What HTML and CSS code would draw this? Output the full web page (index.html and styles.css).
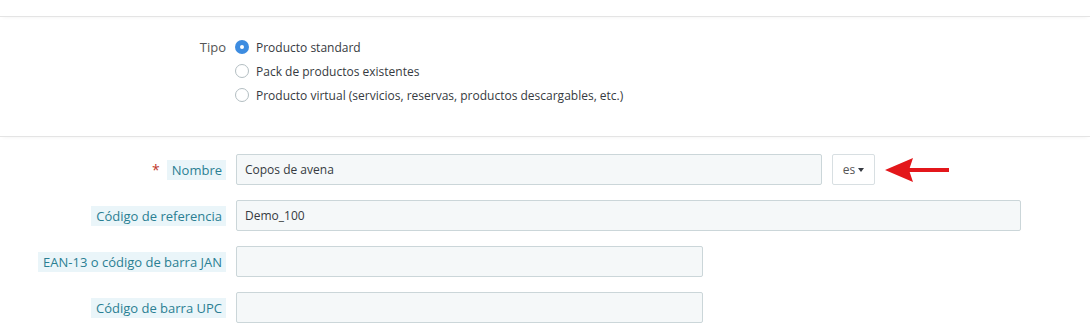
FILE: index.html
```html
<!DOCTYPE html>
<html lang="es">
<head>
  <meta charset="UTF-8" />
  <title>Producto</title>
  <link rel="stylesheet" href="styles.css">
</head>
<body>
  <div class="section section-top"></div>

  <div class="section type-section">
    <div class="form-row">
      <div class="row-label plain">Tipo</div>
      <div class="radio-list">
        <label class="radio"><span class="dot checked"></span>Producto standard</label>
        <label class="radio"><span class="dot"></span>Pack de productos existentes</label>
        <label class="radio"><span class="dot"></span>Producto virtual (servicios, reservas, productos descargables, etc.)</label>
      </div>
    </div>
  </div>

  <div class="section fields">
    <div class="form-row field">
      <div class="row-label"><span class="required">*</span><span class="tag">Nombre</span></div>
      <div class="input wide">Copos de avena</div>
      <div class="lang-btn">es <span class="caret"></span></div>
      <svg class="arrow" width="66" height="26" viewBox="0 0 66 26">
        <rect x="22" y="11" width="42" height="4" fill="#e3171b"/>
        <polygon points="0,13 28,1 24,13 28,25" fill="#e3171b"/>
      </svg>
    </div>
    <div class="form-row field">
      <div class="row-label"><span class="tag">Código de referencia</span></div>
      <div class="input full">Demo_100</div>
    </div>
    <div class="form-row field">
      <div class="row-label"><span class="tag">EAN-13 o código de barra JAN</span></div>
      <div class="input half"></div>
    </div>
    <div class="form-row field">
      <div class="row-label"><span class="tag">Código de barra UPC</span></div>
      <div class="input half"></div>
    </div>
  </div>
</body>
</html>
```

FILE: styles.css
```css
body {
  margin: 0;
  font-family: 'Open Sans', 'Liberation Sans', sans-serif;
  font-size: 12px;
  color: #363a41;
  background: #fff;
}

.section {
  border-bottom: 1px solid #e4e4e4;
  box-shadow: 0 3px 4px -3px rgba(0, 0, 0, 0.06);
}

.section-top {
  height: 16px;
}

.type-section {
  padding: 21px 0 32px;
}

.fields {
  border-bottom: none;
  box-shadow: none;
  padding-top: 17px;
}

.form-row {
  display: flex;
  align-items: flex-start;
}

.row-label {
  width: 226px;
  flex-shrink: 0;
  display: flex;
  justify-content: flex-end;
  align-items: center;
  color: #555;
  font-size: 13px;
}

.row-label.plain {
  height: 18px;
}

.radio-list {
  display: flex;
  flex-direction: column;
  gap: 6px;
  margin-left: 9px;
}

.radio {
  display: flex;
  align-items: center;
  height: 18px;
  color: #363a41;
}

.dot {
  width: 14px;
  height: 14px;
  border: 1px solid #b3bec2;
  border-radius: 50%;
  margin-right: 7px;
  box-sizing: border-box;
  background: #fff;
  position: relative;
}

.dot.checked {
  border: none;
  background: #3d8ce0;
}

.dot.checked::after {
  content: '';
  position: absolute;
  left: 5px;
  top: 5px;
  width: 4px;
  height: 4px;
  border-radius: 50%;
  background: #fff;
}

.field {
  align-items: center;
  margin-bottom: 15px;
}

.field .row-label {
  height: 31px;
}

.required {
  color: #c0392b;
  font-size: 14px;
  margin-right: 7px;
}

.tag {
  background: #eaf5f9;
  color: #2a7f93;
  padding: 2px 4px 2px 5px;
  line-height: 16px;
}

.input {
  margin-left: 10px;
  height: 31px;
  box-sizing: border-box;
  border: 1px solid #cbd6d9;
  border-radius: 2px;
  background: #f5f8f9;
  padding: 0 8px;
  display: flex;
  align-items: center;
  color: #363a41;
}

.input.wide { width: 586px; }
.input.full { width: 785px; }
.input.half { width: 467px; }

.lang-btn {
  margin-left: 10px;
  width: 43px;
  height: 31px;
  box-sizing: border-box;
  border: 1px solid #d8dfe2;
  border-radius: 2px;
  display: flex;
  align-items: center;
  justify-content: center;
  color: #555;
}

.caret {
  margin-left: 3px;
  border-left: 3.5px solid transparent;
  border-right: 3.5px solid transparent;
  border-top: 4px solid #363a41;
}

.arrow {
  margin-left: 10px;
}
```
